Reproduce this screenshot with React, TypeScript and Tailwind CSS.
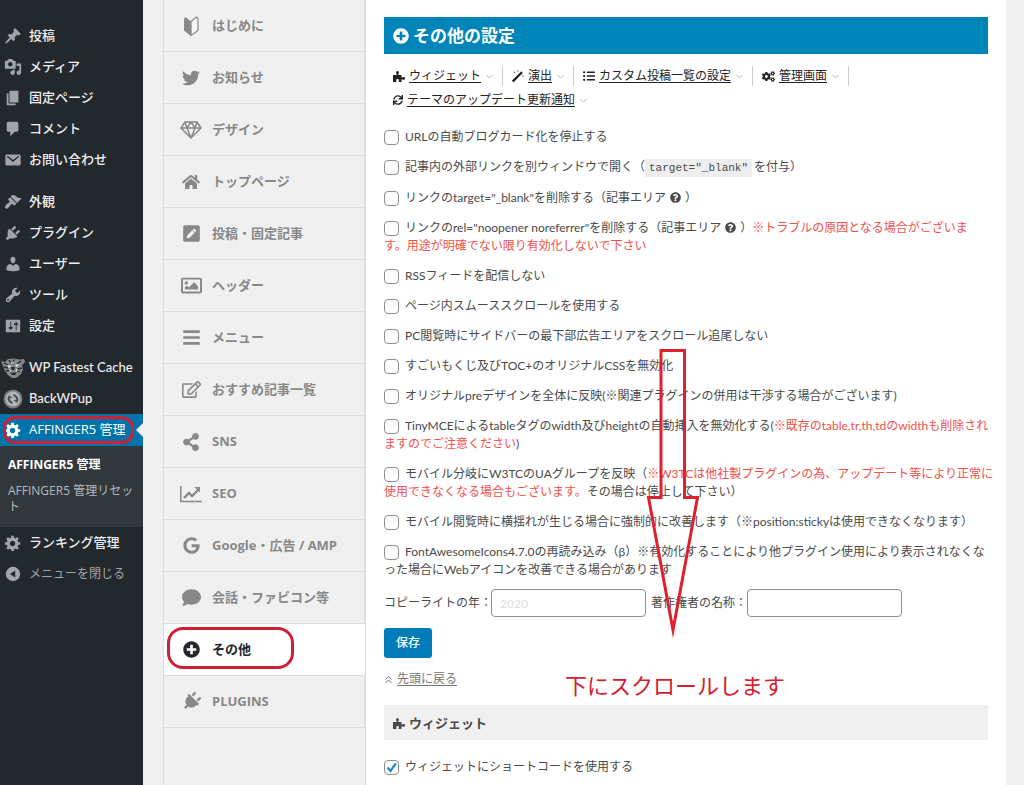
import React from "react";
import {
  FaTwitter, FaHome, FaPenSquare, FaRegImage, FaBars, FaRegEdit, FaShareAlt, FaComment,
  FaPlusCircle, FaPlug, FaGoogle, FaListUl, FaCogs, FaSync,
  FaQuestionCircle,
} from "react-icons/fa";

const dash = {
  post: "M10.44 3.02l1.82-1.82 6.36 6.35-1.83 1.82c-1.05-.68-2.48-.57-3.41.36l-.75.75c-.92.93-1.04 2.35-.35 3.41l-1.83 1.82-2.41-2.41-2.8 2.79c-.42.42-3.38 2.71-3.8 2.29s1.86-3.39 2.28-3.81l2.79-2.79L4.1 9.36l1.83-1.82c1.05.69 2.48.57 3.4-.36l.75-.75c.93-.92 1.05-2.35.36-3.41z",
  media: "M13 11V4c0-.55-.45-1-1-1h-1.67L9 1H5L3.67 3H2c-.55 0-1 .45-1 1v7c0 .55.45 1 1 1h10c.55 0 1-.45 1-1zM7 4.5c1.38 0 2.5 1.12 2.5 2.5S8.38 9.5 7 9.5 4.5 8.38 4.5 7 5.62 4.5 7 4.5zM14 6h5v10.5c0 1.38-1.12 2.5-2.5 2.5S14 17.88 14 16.5s1.12-2.5 2.5-2.5c.17 0 .34.02.5.05V9h-3V6zm-4 8.05V13h2v3.5c0 1.38-1.12 2.5-2.5 2.5S7 17.88 7 16.5 8.12 14 9.5 14c.17 0 .34.02.5.05z",
  page: "M6 15V2h10v13H6zm-1 1h8v2H3V5h2v11z",
  comments: "M5 2h9c1.1 0 2 .9 2 2v7c0 1.1-.9 2-2 2h-2l-5 5v-5H5c-1.1 0-2-.9-2-2V4c0-1.1.9-2 2-2z",
  mail: "M3 4h14c.83 0 1.5.67 1.5 1.5v9c0 .83-.67 1.5-1.5 1.5H3c-.83 0-1.5-.67-1.5-1.5v-9C1.500 4.670 2.170 4 3 4zm.7 1.6c-.5.3-.5.7-.1 1L10 12.200l6.400-5.600c.4-.3.4-.7-.1-1-.4-.2-.7-.1-1 .2L10 10l-5.300-4.200c-.3-.3-.6-.4-1-.2z",
  appearance: "M14.48 11.06L7.41 3.99l1.5-1.5c.5-.56 2.3-.47 3.51.32 1.21.8 1.43 1.28 2.91 2.1 1.18.64 2.45 1.26 4.45.85zm-.71.71L6.7 4.7 4.93 6.47c-.39.39-.39 1.02 0 1.41l1.06 1.06c.39.39.39 1.03 0 1.42-.6.6-1.43 1.11-2.21 1.69-.35.26-.7.53-1.01.84C1.43 14.23.4 16.08 1.4 17.07c.99 1 2.84-.03 4.18-1.36.31-.31.58-.66.85-1.02.57-.78 1.08-1.61 1.69-2.21.39-.39 1.02-.39 1.41 0l1.06 1.06c.39.39 1.02.39 1.41 0z",
  plugins: "M13.11 4.36L9.87 7.6 8 5.73l3.24-3.24c.35-.34 1.05-.2 1.56.32.52.51.66 1.21.31 1.55zm-8 1.77l.91-1.12 9.01 9.01-1.19.84c-.71.71-2.63 1.16-3.82 1.16H6.14L4.9 17.26c-.59.59-1.54.59-2.12 0-.59-.58-.59-1.53 0-2.12l1.24-1.24v-3.88c0-1.13.4-3.19 1.09-3.89zm7.26 3.97l3.24-3.24c.34-.35 1.04-.21 1.55.31.52.51.66 1.21.31 1.55l-3.24 3.25z",
  users: "M10 9.25c-2.27 0-2.73-3.44-2.73-3.44C7 4.02 7.82 2 9.97 2c2.16 0 2.98 2.02 2.71 3.81 0 0-.41 3.44-2.68 3.44zm0 2.57L12.72 10c2.39 0 4.52 2.33 4.52 4.53v2.49s-3.65 1.13-7.24 1.13c-3.65 0-7.24-1.13-7.24-1.13v-2.49c0-2.25 1.94-4.48 4.47-4.48z",
  tools: "M16.68 9.77c-1.34 1.34-3.3 1.67-4.95.99l-5.41 6.52c-.99.99-2.59.99-3.58 0s-.99-2.59 0-3.57l6.52-5.42c-.68-1.65-.35-3.61.99-4.95 1.28-1.28 3.12-1.62 4.72-1.06l-2.89 2.89 2.82 2.82 2.86-2.87c.53 1.58.18 3.39-1.08 4.65zM3.81 16.21c.4.39 1.04.39 1.43 0 .4-.4.4-1.04 0-1.43-.39-.4-1.03-.4-1.43 0-.39.39-.39 1.03 0 1.43z",
  settings: "M18 16V4c0-.55-.45-1-1-1H3c-.55 0-1 .45-1 1v12c0 .55.45 1 1 1h14c.55 0 1-.45 1-1zM8 11h1c.55 0 1 .45 1 1s-.45 1-1 1H8v1.5c0 .28-.22.5-.5.5s-.5-.22-.5-.5V13H6c-.55 0-1-.45-1-1s.45-1 1-1h1V5.5c0-.28.22-.5.5-.5s.5.22.5.5V11zm5-2h-1c-.55 0-1-.45-1-1s.45-1 1-1h1V5.5c0-.28.22-.5.5-.5s.5.22.5.5V7h1c.55 0 1 .45 1 1s-.45 1-1 1h-1v5.5c0 .28-.22.5-.5.5s-.5-.22-.5-.5V9z",
  generic: "M18 12h-2.18c-.17.7-.44 1.35-.81 1.93l1.54 1.54-2.1 2.1-1.54-1.54c-.58.36-1.23.63-1.91.79V19H8v-2.18c-.68-.16-1.33-.43-1.91-.79l-1.54 1.54-2.12-2.12 1.54-1.54c-.36-.58-.63-1.23-.79-1.91H1V9.03h2.17c.16-.7.44-1.35.8-1.94L2.43 5.55l2.1-2.1 1.54 1.54c.58-.37 1.24-.64 1.93-.81V2h3v2.18c.68.16 1.33.43 1.91.79l1.54-1.54 2.12 2.12-1.54 1.54c.36.59.64 1.24.8 1.94H18V12zm-8.5 1.5c1.66 0 3-1.34 3-3s-1.34-3-3-3-3 1.34-3 3 1.34 3 3 3z",
  collapse: "M10 2a8 8 0 1 0 0 16 8 8 0 0 0 0-16zm2.500 4v8L6.500 10z",
};

function Dashicon({ d }: { d: string }) {
  return (
    <svg viewBox="0 0 20 20" className="size-[18px]" fill="currentColor" fillRule="evenodd" aria-hidden="true">
      <path d={d} />
    </svg>
  );
}

function TigerIcon() {
  return (
    <svg viewBox="0 0 24 20" className="h-5 w-6 shrink-0" aria-hidden="true">
      <path d="M0 3l4 1 3-3 6-.5 5 1L23 1l1 3-3 3 1 4-2 5-5 4h-4l-4-3-3-4-2-5z" fill="#85898c" />
      <path d="M3 5l4 2M8 2l2 3M13 1.500l-1 3M20 3l-4 3M3 9l4 1M5 13l4-1M21 10l-4 1M19 14l-3-1" stroke="#23282d" strokeWidth="1.300" />
      <path d="M6 7l4 1-2 2zM14 7l4-1-2 3z" fill="#ededed" />
      <path d="M10 9h4l-1 3h-2zM9 14l3 1 4-1-2 3h-3z" fill="#23282d" />
      <path d="M8 11l2 3M16 11l-1 3M10 5l3-1" stroke="#ddd" strokeWidth="1" />
    </svg>
  );
}

function BackupIcon() {
  return (
    <svg viewBox="0 0 20 20" className="size-5" aria-hidden="true">
      <circle cx="10" cy="10" r="9.500" fill="#777b7e" />
      <circle cx="10" cy="10" r="7.500" fill="#b2b5b7" />
      <path d="M5.500 8.500q0 4 4 5.500M14.500 11.500q0-4-4-5.500" fill="none" stroke="#4a4f53" strokeWidth="2" />
      <path d="M4.500 9.500L6 6l3.500 3zM15.500 10.500L14 14l-3.500-3z" fill="#4a4f53" />
    </svg>
  );
}

function BeginnerIcon() {
  return (
    <svg viewBox="0 0 16 20" className="h-5 w-4" aria-hidden="true">
      <path d="M1 2.500L2.500 1 8 5.500V20L1 14.500z" fill="#888" />
      <path d="M8 5.500L13.500 1 15 2.500v12L8 19.500z" fill="#f4f8f8" stroke="#888" strokeWidth="1.200" />
    </svg>
  );
}

function DiamondIcon() {
  return (
    <svg viewBox="0 0 22 18" className="h-[18px] w-[22px]" fill="none" stroke="currentColor" strokeWidth="1.500" strokeLinejoin="round" aria-hidden="true">
      <path d="M5 1h12l4 6-10 10L1 7zM1 7h20M5 1l2 6 4 10 4-10 2-6M7 7l4-6 4 6" />
    </svg>
  );
}

function ChartIcon() {
  return (
    <svg viewBox="0 0 22 18" className="h-[18px] w-[22px]" fill="none" stroke="currentColor" aria-hidden="true">
      <path d="M.8 1v15.500H22" strokeWidth="1.500" />
      <path d="M4 13l5-5 3 3 6-6" strokeWidth="2.400" />
      <path d="M14.500 2H20v5.500z" fill="currentColor" stroke="none" />
    </svg>
  );
}

function PuzzleIcon() {
  return (
    <svg viewBox="0 0 12 12" className="size-3 shrink-0" fill="currentColor" aria-hidden="true">
      <path d="M0 5h3.200c.5 0 .6-.4.4-.8C2.900 3 2.900 1 4.500 1s1.700 2 .9 3.200c-.2.4-.1.8.4.8H8.500v2c0 .5.4.6.8.4 1.300-.8 2.700-.4 2.700 1s-1.400 1.800-2.700 1c-.4-.2-.8-.1-.8.4V12H6c-.5-.4-.5-.8-.2-1.200.5-1 0-1.800-1.200-1.800s-1.800.8-1.200 1.800c.3.4.2.8-.3 1.200H0z" />
    </svg>
  );
}

function WandIcon() {
  return (
    <svg viewBox="0 0 12 12" className="size-3 shrink-0" fill="currentColor" aria-hidden="true">
      <path d="M.3 10.300L8.900 1.700c.3-.3.6-.3.900 0l.7.7c.3.3.3.6 0 .9L1.900 11.900c-.3.200-.6.200-.9 0l-.7-.7c-.2-.3-.2-.6 0-.9z" />
      <path d="M2.500 1l.3.900.9.300-.9.300-.3.900-.3-.9-.9-.3.900-.3zM6 0l.3.700.7.300-.7.300L6 2l-.3-.7L5 1l.7-.3zM11 5l.3.700.7.300-.7.300L11 7l-.3-.7L10 6l.7-.3z" />
    </svg>
  );
}

function ChevronIcon() {
  return (
    <svg viewBox="0 0 9 9" className="size-[9px] shrink-0 text-[#bbb]" fill="none" stroke="currentColor" aria-hidden="true">
      <path d="M1.500 3l3 3 3-3" />
    </svg>
  );
}

function TopIcon() {
  return (
    <svg viewBox="0 0 9 9" className="size-[9px] shrink-0" fill="none" stroke="currentColor" aria-hidden="true">
      <path d="M1.500 4.500l3-3 3 3M1.500 8l3-3 3 3" />
    </svg>
  );
}

type MenuEntry = { label: string; icon: React.ReactNode };

const adminGroups: MenuEntry[][] = [
  [
    { label: "投稿", icon: <Dashicon d={dash.post} /> },
    { label: "メディア", icon: <Dashicon d={dash.media} /> },
    { label: "固定ページ", icon: <Dashicon d={dash.page} /> },
    { label: "コメント", icon: <Dashicon d={dash.comments} /> },
    { label: "お問い合わせ", icon: <Dashicon d={dash.mail} /> },
  ],
  [
    { label: "外観", icon: <Dashicon d={dash.appearance} /> },
    { label: "プラグイン", icon: <Dashicon d={dash.plugins} /> },
    { label: "ユーザー", icon: <Dashicon d={dash.users} /> },
    { label: "ツール", icon: <Dashicon d={dash.tools} /> },
    { label: "設定", icon: <Dashicon d={dash.settings} /> },
  ],
  [
    { label: "WP Fastest Cache", icon: <TigerIcon /> },
    { label: "BackWPup", icon: <BackupIcon /> },
  ],
];

function AdminRow({ label, icon }: MenuEntry) {
  return (
    <a href="#" className="flex h-[31px] items-center gap-1 text-[#eee]">
      <span className="flex w-[25px] shrink-0 justify-center text-[#a0a5aa]">{icon}</span>
      <span className="whitespace-nowrap">{label}</span>
    </a>
  );
}

function AdminMenu() {
  return (
    <nav className="w-[143px] shrink-0 bg-[#23282d] pt-5 font-['Lato','Noto_Sans_CJK_JP',sans-serif] text-[13px] font-medium">
      {adminGroups.map((group, i) => (
        <div key={i} className={i < 2 ? "mb-[11px]" : ""}>
          {group.map((m) => <AdminRow key={m.label} {...m} />)}
        </div>
      ))}
      <div className="font-['Open_Sans','Noto_Sans_CJK_JP',sans-serif]">
        <a href="#" className="relative flex h-8 items-center gap-1 bg-[#0073aa] text-white">
          <span className="flex w-[25px] shrink-0 justify-center"><Dashicon d={dash.generic} /></span>
          <span className="font-normal whitespace-nowrap">AFFINGER5 管理</span>
          <svg viewBox="0 0 7 14" className="absolute top-[9px] right-0 h-3.5 w-[7px]" aria-hidden="true">
            <path d="M7 0v14L0 7z" fill="#f0f0f0" />
          </svg>
          <span className="absolute inset-y-[2px] right-[9px] left-[3px] rounded-xl border-[3px] border-[#cf1f34]" />
        </a>
        <div className="flex flex-col gap-2.5 bg-[#32373c] px-2 pt-[11px] pb-3 text-[12px] leading-4">
          <a href="#" className="font-bold text-white">AFFINGER5 管理</a>
          <a href="#" className="font-normal break-all text-[#b4b9be]">AFFINGER5 管理リセット</a>
        </div>
      </div>
      <AdminRow label="ランキング管理" icon={<Dashicon d={dash.generic} />} />
      <button type="button" className="flex h-[31px] w-full items-center gap-1 text-[12px] font-normal text-[#a0a5aa]">
        <span className="flex w-[25px] shrink-0 justify-center"><Dashicon d={dash.collapse} /></span>
        メニューを閉じる
      </button>
    </nav>
  );
}

const tabs: MenuEntry[] = [
  { label: "はじめに", icon: <BeginnerIcon /> },
  { label: "お知らせ", icon: <FaTwitter size={18} /> },
  { label: "デザイン", icon: <DiamondIcon /> },
  { label: "トップページ", icon: <FaHome size={18} /> },
  { label: "投稿・固定記事", icon: <FaPenSquare size={19} /> },
  { label: "ヘッダー", icon: <FaRegImage size={21} /> },
  { label: "メニュー", icon: <FaBars size={19} /> },
  { label: "おすすめ記事一覧", icon: <FaRegEdit size={19} /> },
  { label: "SNS", icon: <FaShareAlt size={18} /> },
  { label: "SEO", icon: <ChartIcon /> },
  { label: "Google・広告 / AMP", icon: <FaGoogle size={17} /> },
  { label: "会話・ファビコン等", icon: <FaComment size={19} /> },
  { label: "その他", icon: <FaPlusCircle size={17} /> },
  { label: "PLUGINS", icon: <FaPlug size={19} className="rotate-45" /> },
];

function SettingTabs() {
  return (
    <nav className="w-[202px] shrink-0 border-l border-[#ddd]">
      {tabs.map((t) => {
        const active = t.label === "その他";
        return (
          <a
            key={t.label}
            href="#"
            className={
              "relative flex h-[52px] items-center gap-2.5 border-b border-[#ddd] pl-4 text-[13px] font-bold " +
              (active ? "z-10 bg-white text-[#23282d]" : "border-r text-[#888]")
            }
          >
            <span className="flex w-[22px] shrink-0 justify-center">{t.icon}</span>
            {t.label}
            {active && <span className="absolute top-[3px] left-[3px] h-[42px] w-[127px] rounded-2xl border-[3px] border-[#cf1f34]" />}
          </a>
        );
      })}
    </nav>
  );
}

const links = [
  { label: "ウィジェット", icon: <PuzzleIcon />, sep: true },
  { label: "演出", icon: <WandIcon />, sep: true },
  { label: "カスタム投稿一覧の設定", icon: <FaListUl size={12} />, sep: true },
  { label: "管理画面", icon: <FaCogs size={13} />, sep: true },
  { label: "テーマのアップデート更新通知", icon: <FaSync size={10} />, sep: false },
];

function Check({ id, checked, children }: { id: string; checked?: boolean; children: React.ReactNode }) {
  return (
    <label htmlFor={id} className="-mr-3 block">
      <span className="relative mr-1.5 inline-flex align-middle">
        <input id={id} type="checkbox" defaultChecked={checked} className="peer size-[15px] appearance-none rounded border border-[#8c8f94] bg-white" />
        <svg viewBox="0 0 11 11" className="pointer-events-none absolute top-[2px] left-[2px] hidden size-[11px] peer-checked:block" fill="none" stroke="#1e8cbe" strokeWidth="2.200" aria-hidden="true">
          <path d="M1.500 5.500l3 3.500L9.800 1.500" />
        </svg>
      </span>
      {children}
    </label>
  );
}

function Red({ children }: { children: React.ReactNode }) {
  return <span className="text-[#f0504c]">{children}</span>;
}

function Help() {
  return <FaQuestionCircle size={11} className="mx-1 inline align-[-1px]" />;
}

function Settings() {
  return (
    <main className="relative mr-[18px] min-w-0 flex-1 border-l border-[#ddd] bg-white px-[18px] pt-[17px] font-['Lato','Noto_Sans_CJK_JP',sans-serif] text-[12px] leading-[18px] text-[#4a4a4a]">
      <h1 className="flex h-[37px] items-center gap-1 bg-[#0085ba] pl-[9px] text-[17px] font-bold text-white">
        <FaPlusCircle size={16} />
        その他の設定
      </h1>
      <div className="mt-2.5 flex flex-wrap">
        {links.map((l) => (
          <span key={l.label} className="flex h-6 items-center">
            <span className={"flex h-5 items-center gap-1 pr-2 pl-[9px] text-[#222] " + (l.sep ? "border-r border-[#ccc]" : "")}>
              {l.icon}
              <a href="#" className="underline underline-offset-2">{l.label}</a>
              <ChevronIcon />
            </span>
          </span>
        ))}
      </div>
      <form className="mt-4">
        <div className="flex flex-col gap-3">
          <Check id="c1">URLの自動ブログカード化を停止する</Check>
          <Check id="c2">
            記事内の外部リンクを別ウィンドウで開く（
            <code className="mr-0.5 bg-[#eee] px-1 py-[3px] font-['Liberation_Mono',monospace] text-[11px]">target="_blank"</code>
            を付与）
          </Check>
          <Check id="c3">リンクのtarget="_blank"を削除する（記事エリア<Help />）</Check>
          <Check id="c4">
            リンクのrel="noopener noreferrer"を削除する（記事エリア<Help />）
            <Red>※トラブルの原因となる場合がございま</Red>
            <br />
            <Red>す。用途が明確でない限り有効化しないで下さい</Red>
          </Check>
          <Check id="c5">RSSフィードを配信しない</Check>
          <Check id="c6">ページ内スムーススクロールを使用する</Check>
          <Check id="c7">PC閲覧時にサイドバーの最下部広告エリアをスクロール追尾しない</Check>
          <Check id="c8">すごいもくじ及びTOC+のオリジナルCSSを無効化</Check>
          <Check id="c9">オリジナルpreデザインを全体に反映(※関連プラグインの併用は干渉する場合がございます)</Check>
          <Check id="c10">
            TinyMCEによるtableタグのwidth及びheightの自動挿入を無効化する(
            <Red>※既存のtable,tr,th,tdのwidthも削除され</Red>
            <br />
            <Red>ますのでご注意ください</Red>)
          </Check>
          <Check id="c11">
            モバイル分岐にW3TCのUAグループを反映（
            <Red>※W3TCは他社製プラグインの為、アップデート等により正常に</Red>
            <br />
            <Red>使用できなくなる場合もございます。</Red>
            その場合は停止して下さい）
          </Check>
          <Check id="c12">モバイル閲覧時に横揺れが生じる場合に強制的に改善します（※position:stickyは使用できなくなります）</Check>
          <Check id="c13">
            FontAwesomeIcons4.7.0の再読み込み（β）※有効化することにより他プラグイン使用により表示されなくな
            <br />
            った場合にWebアイコンを改善できる場合があります
          </Check>
        </div>
        <div className="mt-[10px] flex items-center">
          <label htmlFor="year" className="w-[107px] shrink-0 whitespace-nowrap">コピーライトの年：</label>
          <input id="year" placeholder="2020" className="h-7 w-[155px] rounded border border-[#8c8f94] bg-white px-2 placeholder:text-[#ddd]" />
          <label htmlFor="owner" className="ml-[5px] w-24 shrink-0 whitespace-nowrap">著作権者の名称：</label>
          <input id="owner" className="h-7 w-[155px] rounded border border-[#8c8f94] bg-white px-2" />
        </div>
        <button type="button" className="mt-[11px] block h-[30px] rounded-[3px] bg-[#007cba] px-3 font-medium text-white">保存</button>
      </form>
      <p className="mt-3 flex items-center gap-1 text-[#777]">
        <TopIcon />
        <a href="#" className="underline underline-offset-2">先頭に戻る</a>
      </p>
      <h2 className="mt-[17px] mb-[18px] flex h-[35px] items-center gap-1 bg-[#f0f0f0] pl-[9px] text-[13px] font-bold">
        <PuzzleIcon />
        ウィジェット
      </h2>
      <Check id="c14" checked>ウィジェットにショートコードを使用する</Check>

      <svg viewBox="0 0 54 296" className="pointer-events-none absolute top-[348px] left-[280px] h-[296px] w-[54px]" fill="none" stroke="#e0202c" strokeWidth="3" strokeMiterlimit="20" aria-hidden="true">
        <path d="M15 2.500H38.500V149.500H51.500L27 282 2.500 149.500H15z" />
      </svg>
      <p className="pointer-events-none absolute top-[670px] left-[199px] text-[22px] leading-8 whitespace-nowrap text-[#d3202e]">下にスクロールします</p>
    </main>
  );
}

export default function App() {
  return (
    <div className="flex min-h-screen gap-5 bg-[#f0f0f0] font-['Open_Sans','Noto_Sans_CJK_JP',sans-serif]">
      <AdminMenu />
      <div className="flex min-w-0 flex-1">
        <SettingTabs />
        <Settings />
      </div>
    </div>
  );
}
